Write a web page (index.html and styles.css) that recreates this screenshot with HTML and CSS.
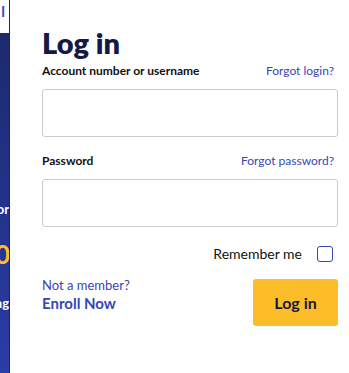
FILE: index.html
```html
<!DOCTYPE html>
<html lang="en">
<head>
    <meta charset="UTF-8">
    <meta name="viewport" content="width=device-width, initial-scale=1.0">
    <title>Log in</title>
    <link rel="stylesheet" href="styles.css">
</head>
<body>
    <aside class="side">
        <div class="side-nav"><span class="side-nav-mark">l</span></div>
        <div class="side-hero">
            <div class="hero-line hero-text">Earn more with every flight or</div>
            <div class="hero-line hero-big">2,000</div>
            <div class="hero-line hero-text">bonus miles with every bag</div>
        </div>
    </aside>

    <main class="panel">
        <h1>Log in</h1>
        <form class="login-form">
            <div class="field">
                <div class="field-head">
                    <label for="username">Account number or username</label>
                    <a href="#" class="link">Forgot login?</a>
                </div>
                <input type="text" id="username">
            </div>

            <div class="field">
                <div class="field-head">
                    <label for="password">Password</label>
                    <a href="#" class="link">Forgot password?</a>
                </div>
                <input type="password" id="password">
            </div>

            <div class="remember">
                <label for="remember">Remember me</label>
                <input type="checkbox" id="remember">
            </div>

            <div class="actions">
                <div class="enroll">
                    <span class="enroll-q">Not a member?</span>
                    <a href="#" class="enroll-link">Enroll Now</a>
                </div>
                <button type="submit" class="btn-login">Log in</button>
            </div>
        </form>
    </main>
</body>
</html>
```

FILE: styles.css
```css
body {
    margin: 0;
    font-family: 'Lato', 'Liberation Sans', sans-serif;
    background-color: #fff;
    color: #111;
    display: flex;
    min-height: 373px;
}

/* left strip (cut-off hero) */
.side {
    width: 9px;
    flex-shrink: 0;
    overflow: hidden;
    border-right: 1px solid #1c2458;
    display: flex;
    flex-direction: column;
}

.side-nav {
    height: 33px;
    background-color: #fff;
    display: flex;
    justify-content: flex-end;
}

.side-nav-mark {
    color: #3b4cc0;
    font-size: 15px;
    font-weight: bold;
    line-height: 15px;
    margin-top: 4px;
    margin-right: 4px;
}

.side-hero {
    flex: 1;
    background: linear-gradient(180deg, #1d2a6c 0%, #23338a 50%, #2a3da6 100%);
    padding-top: 168px;
}

.hero-line {
    display: flex;
    justify-content: flex-end;
    white-space: nowrap;
}

.hero-text {
    color: #fff;
    font-size: 13px;
    font-weight: bold;
    line-height: 16px;
}

.hero-big {
    color: #fdbd29;
    font-size: 26px;
    font-weight: bold;
    line-height: 30px;
    margin: 22px -1px 26px 0;
}

/* login panel */
.panel {
    flex: 1;
    padding: 27px 11px 20px 32px;
}

h1 {
    margin: 0;
    font-size: 29px;
    line-height: 32px;
    font-weight: 800;
    color: #141a45;
}

.field {
    margin-bottom: 16px;
}

.field-head {
    display: flex;
    justify-content: space-between;
    align-items: baseline;
    margin-top: 4px;
    margin-bottom: 11px;
    padding-right: 4px;
}

.field-head label {
    font-size: 12px;
    font-weight: bold;
    color: #111;
}

.link {
    font-size: 12px;
    color: #3646b4;
    text-decoration: none;
}

input[type="text"], input[type="password"] {
    display: block;
    width: 100%;
    height: 48px;
    box-sizing: border-box;
    border: 1px solid #cbcbcb;
    border-radius: 3px;
    font-family: inherit;
}

.remember {
    display: flex;
    justify-content: flex-end;
    align-items: center;
    margin-top: 18px; /* collapses with .field margin */
    padding-right: 5px;
}

.remember label {
    font-size: 14px;
    color: #111;
    margin-right: 15px;
}

.remember input {
    appearance: none;
    margin: 0;
    width: 16px;
    height: 16px;
    border: 1.5px solid #3646b4;
    border-radius: 3px;
    box-sizing: border-box;
}

.actions {
    display: flex;
    justify-content: space-between;
    align-items: flex-start;
    margin-top: 17px;
}

.enroll {
    display: flex;
    flex-direction: column;
    margin-top: -2px;
}

.enroll-q {
    font-size: 13px;
    color: #3646b4;
    line-height: 17px;
}

.enroll-link {
    font-size: 15px;
    font-weight: bold;
    color: #3646b4;
    text-decoration: none;
    line-height: 19px;
}

.btn-login {
    width: 85px;
    height: 47px;
    background-color: #fdbd29;
    color: #161a3f;
    border: none;
    border-radius: 3px;
    font-family: inherit;
    font-size: 16px;
    font-weight: bold;
    cursor: pointer;
}
```
